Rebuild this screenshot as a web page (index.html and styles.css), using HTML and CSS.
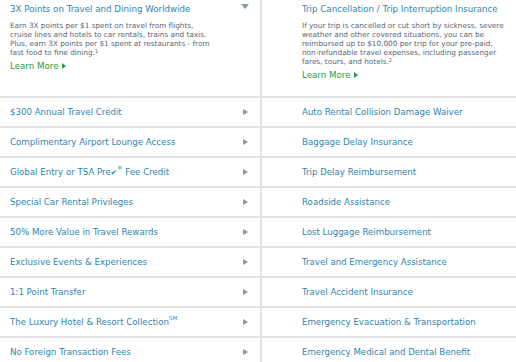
FILE: index.html
```html
<!DOCTYPE html>
<html>
<head>
  <title>Travel Benefits</title>
  <meta charset="utf-8"/>
  <link rel="stylesheet" href="styles.css">
</head>
<body>
  <div class="benefits">
    <div class="cell feature left">
      <span class="toggle"></span>
      <h3 class="feature-title">3X Points on Travel and Dining Worldwide</h3>
      <p class="feature-text">Earn 3X points per $1 spent on travel from flights, cruise lines and hotels to car rentals, trains and taxis. Plus, earn 3X points per $1 spent at restaurants - from fast food to fine dining.<sup>1</sup></p>
      <a class="learn-more" href="#">Learn More</a>
    </div>
    <div class="cell feature right">
      <h3 class="feature-title">Trip Cancellation / Trip Interruption Insurance</h3>
      <p class="feature-text">If your trip is cancelled or cut short by sickness, severe weather and other covered situations, you can be reimbursed up to $10,000 per trip for your pre-paid, non-refundable travel expenses, including passenger fares, tours, and hotels.<sup>2</sup></p>
      <a class="learn-more" href="#">Learn More</a>
    </div>

    <div class="cell item"><span>$300 Annual Travel Credit</span><i class="arrow"></i></div>
    <div class="cell item right"><span>Auto Rental Collision Damage Waiver</span></div>

    <div class="cell item"><span>Complimentary Airport Lounge Access</span><i class="arrow"></i></div>
    <div class="cell item right"><span>Baggage Delay Insurance</span></div>

    <div class="cell item"><span>Global Entry or TSA Pre<span class="check">&#10004;</span><sup>&reg;</sup> Fee Credit</span><i class="arrow"></i></div>
    <div class="cell item right"><span>Trip Delay Reimbursement</span></div>

    <div class="cell item"><span>Special Car Rental Privileges</span><i class="arrow"></i></div>
    <div class="cell item right"><span>Roadside Assistance</span></div>

    <div class="cell item"><span>50% More Value in Travel Rewards</span><i class="arrow"></i></div>
    <div class="cell item right"><span>Lost Luggage Reimbursement</span></div>

    <div class="cell item"><span>Exclusive Events &amp; Experiences</span><i class="arrow"></i></div>
    <div class="cell item right"><span>Travel and Emergency Assistance</span></div>

    <div class="cell item"><span>1:1 Point Transfer</span><i class="arrow"></i></div>
    <div class="cell item right"><span>Travel Accident Insurance</span></div>

    <div class="cell item"><span>The Luxury Hotel &amp; Resort Collection<sup>SM</sup></span><i class="arrow"></i></div>
    <div class="cell item right"><span>Emergency Evacuation &amp; Transportation</span></div>

    <div class="cell item"><span>No Foreign Transaction Fees</span><i class="arrow"></i></div>
    <div class="cell item right"><span>Emergency Medical and Dental Benefit</span></div>
  </div>
</body>
</html>
```

FILE: styles.css
```css
body {
	margin: 0;
	background: #fff;
	font-family: "DejaVu Sans", Verdana, sans-serif;
}
.benefits {
	display: grid;
	grid-template-columns: 260px 1fr;
}
.cell {
	border-bottom: 2px solid #e3e3e3;
	box-sizing: border-box;
}
.right {
	border-left: 2px solid #e3e3e3;
	padding-left: 40px;
}
.feature {
	position: relative;
	height: 98px;
	padding-top: 3px;
	padding-left: 10px;
	padding-right: 4px;
	font-size: 8.7px;
	line-height: 11px;
}
.feature.right {
	padding-left: 40px;
}
.feature .feature-text {
	max-width: 209px;
}
.feature.left .feature-text {
	max-width: 205px;
}
.feature-title {
	margin: 0 0 5px 0;
	font-size: 8.7px;
	font-weight: normal;
	color: #2f86ad;
	line-height: 13px;
	white-space: nowrap;
}
.feature-text {
	margin: 0 0 4px 0;
	font-size: 7.3px;
	line-height: 9px;
	color: #5b6776;
}
sup {
	font-size: 5px;
	line-height: 0;
	vertical-align: 2px;
}
.learn-more {
	font-size: 8.7px;
	line-height: 11px;
	color: #2c9a3e;
	text-decoration: none;
}
.learn-more:after {
	content: "";
	display: inline-block;
	margin-left: 3px;
	border-left: 4px solid #2c9a3e;
	border-top: 3px solid transparent;
	border-bottom: 3px solid transparent;
}
.toggle {
	position: absolute;
	top: 4px;
	right: 11px;
	border-top: 5px solid #8a9aab;
	border-left: 4px solid transparent;
	border-right: 4px solid transparent;
}
.item {
	height: 30px;
	display: flex;
	align-items: center;
	justify-content: space-between;
	padding-left: 10px;
	padding-right: 12px;
	font-size: 8.65px;
	color: #2f86ad;
}
.item.right {
	padding-left: 40px;
}
.check {
	font-size: 7.5px;
}
.item sup {
	font-size: 5.5px;
	vertical-align: 5px;
}
.arrow {
	display: block;
	border-left: 5px solid #8a97a6;
	border-top: 3.5px solid transparent;
	border-bottom: 3.5px solid transparent;
}
```
